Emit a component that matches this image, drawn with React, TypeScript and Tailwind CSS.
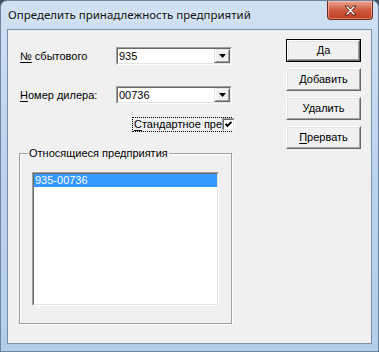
import React from 'react';

const sans = { fontFamily: '"Liberation Sans", Arial, sans-serif' };

function DropButton() {
  return (
    <div className="flex h-full w-[16px] border border-t-[#e3e3e3] border-l-[#e3e3e3] border-b-[#696969] border-r-[#696969]">
      <div className="flex flex-1 items-center justify-center border border-t-white border-l-white border-b-[#a0a0a0] border-r-[#a0a0a0] bg-[#f0f0f0]">
        <svg width="7" height="4" viewBox="0 0 7 4">
          <path d="M0 0h7L3.5 4z" fill="#000" />
        </svg>
      </div>
    </div>
  );
}

function Combo({ value }: { value: string }) {
  return (
    <div className="flex h-[18px] w-[116px] border border-t-[#a0a0a0] border-l-[#a0a0a0] border-b-white border-r-white">
      <div className="flex flex-1 border border-t-[#696969] border-l-[#696969] border-b-[#e3e3e3] border-r-[#e3e3e3] bg-white">
        <span className="flex-1 pl-[1px] text-[11px] leading-[14px] text-black">{value}</span>
        <DropButton />
      </div>
    </div>
  );
}

function Button({ label, hot, isDefault }: { label: string; hot?: boolean; isDefault?: boolean }) {
  const text = hot ? (
    <>
      <span className="underline underline-offset-[2px]">{label[0]}</span>
      {label.slice(1)}
    </>
  ) : (
    label
  );
  const face = (
    <div className="flex flex-1 border border-t-white border-l-white border-b-[#696969] border-r-[#696969]">
      <div className="flex flex-1 items-center justify-center border border-t-[#e3e3e3] border-l-[#e3e3e3] border-b-[#a0a0a0] border-r-[#a0a0a0] bg-[#f0f0f0] text-[11px] leading-[13px] text-black">
        {text}
      </div>
    </div>
  );
  return (
    <div className={`flex h-[23px] w-[75px] ${isDefault ? 'border border-black' : ''}`}>{face}</div>
  );
}

export default function App() {
  return (
    <div className="h-[352px] w-[379px] bg-[#3a4a5c]" style={sans}>
      <div className="flex h-full w-full flex-col rounded-t-[7px] border border-[#6f86a3] bg-gradient-to-b from-[#cfe0f2] via-[#bcd3ec] to-[#b4cde9]">
        {/* title bar */}
        <div className="flex h-[28px] shrink-0 items-start">
          <span
            className="ml-[7px] mt-[6px] text-[11.5px] leading-[16px] text-[#101010]"
            style={{ fontFamily: '"Noto Sans", "Liberation Sans", sans-serif', textShadow: '0 0 6px rgba(255,255,255,0.9)' }}
          >
            Определить принадлежность предприятий
          </span>
          <div className="ml-auto mr-[5px] flex h-[19px] w-[46px] items-center justify-center rounded-b-[4px] border border-t-0 border-[#6b2a1c] bg-gradient-to-b from-[#e9a797] via-[#cf5a3f] to-[#c2391e] shadow-[inset_0_0_0_1px_rgba(255,210,200,0.5)]">
            <svg width="13" height="11" viewBox="0 0 13 11">
              <path
                d="M1 1h3l2.5 3L9 1h3L8 5.5 12 10H9L6.5 7 4 10H1l4-4.5z"
                fill="#fff"
                stroke="#4a1a10"
                strokeWidth="0.9"
                strokeLinejoin="round"
              />
            </svg>
          </div>
        </div>

        {/* client area */}
        <div className="mx-[6px] flex h-[315px] shrink-0 border border-[#7b8ea8] bg-[#f0f0f0] text-[11px] text-black">
          <div className="flex w-[224px] flex-col pl-[11px] pt-[17px]">
            <div className="flex h-[18px] items-center">
              <span className="w-[97px] pl-[1px] leading-[13px]">
                <span className="underline underline-offset-[2px]">№</span> сбытового
              </span>
              <Combo value="935" />
            </div>
            <div className="mt-[21px] flex h-[18px] items-center">
              <span className="w-[97px] pl-[1px] leading-[13px]">
                <span className="underline underline-offset-[2px]">Н</span>омер дилера:
              </span>
              <Combo value="00736" />
            </div>
            <div className="ml-[113px] mt-[13px] flex h-[15px] w-[100px] items-center border border-dotted border-black">
              <span className="whitespace-nowrap pl-[1px] leading-[13px]">
                <span className="underline underline-offset-[2px]">С</span>тандартное пре
              </span>
              <div className="ml-auto flex h-[13px] w-[13px] shrink-0 border border-t-[#a0a0a0] border-l-[#a0a0a0] border-b-white border-r-white">
                <div className="flex flex-1 items-center justify-center border border-t-[#696969] border-l-[#696969] border-b-[#e3e3e3] border-r-[#e3e3e3] bg-white">
                  <svg width="7" height="7" viewBox="0 0 7 7">
                    <path d="M0.6 3 L2.5 4.9 L6.5 0.9" fill="none" stroke="#000" strokeWidth="2" />
                  </svg>
                </div>
              </div>
            </div>
            <fieldset className="mt-[15px] h-[177px] w-[213px] border border-[#a0a0a0] shadow-[inset_1px_1px_0_#fff,1px_1px_0_#fff]">
              <legend className="ml-[8px] px-[1px] leading-[13px]">Относящиеся предприятия</legend>
              <div className="ml-[12px] mt-[12px] h-[134px] w-[187px] border border-t-[#a0a0a0] border-l-[#a0a0a0] border-b-white border-r-white">
                <div className="h-full border border-t-[#696969] border-l-[#696969] border-b-[#e3e3e3] border-r-[#e3e3e3] bg-white">
                  <div className="h-[13px] bg-[#3399ff] pl-[1px] leading-[13px] text-white">935-00736</div>
                </div>
              </div>
            </fieldset>
          </div>

          <div className="ml-auto mr-[10px] mt-[9px] flex flex-col gap-[6px]">
            <Button label="Да" isDefault />
            <Button label="Добавить" />
            <Button label="Удалить" />
            <Button label="Прервать" hot />
          </div>
        </div>
      </div>
    </div>
  );
}
